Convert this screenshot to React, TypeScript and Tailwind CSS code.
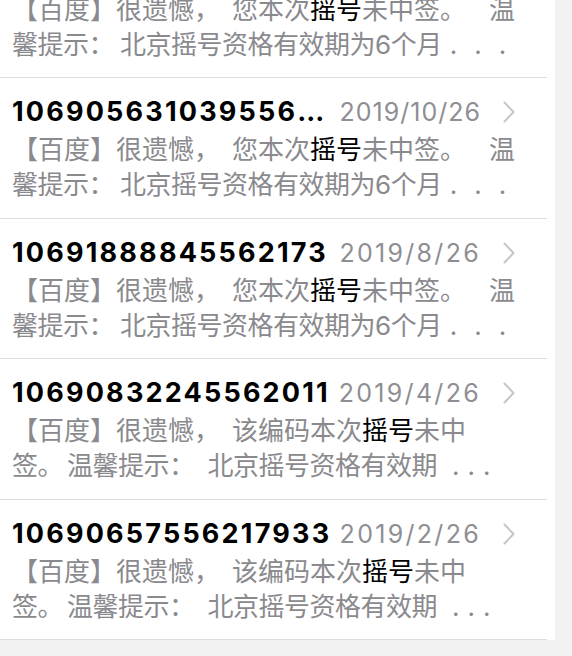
import React from "react";

type Row = {
  title: string;
  more?: boolean;
  date: string;
  kind: "A" | "B";
};

const rows: Row[] = [
  { title: "10690000000000000", date: "2019/11/26", kind: "A" },
  { title: "106905631039556", more: true, date: "2019/10/26", kind: "A" },
  { title: "10691888845562173", date: "2019/8/26", kind: "A" },
  { title: "10690832245562011", date: "2019/4/26", kind: "B" },
  { title: "10690657556217933", date: "2019/2/26", kind: "B" },
];

function Chevron() {
  return (
    <svg
      className="ml-[22px] shrink-0"
      width="12"
      height="22"
      viewBox="0 0 12 22"
      fill="none"
    >
      <path
        d="M1.5 1.5 L10.5 11 L1.5 20.5"
        stroke="#c6c6c9"
        strokeWidth="2"
        strokeLinecap="round"
        strokeLinejoin="round"
      />
    </svg>
  );
}

function BodyA() {
  return (
    <>
      <div>
        【百度】很遗憾<span className="mr-[12px]">，</span>您本次
        <span className="text-black">摇号</span>未中签
        <span className="mr-[23px]">。</span>温
      </div>
      <div className="tracking-[-0.5px]">
        馨提示<span className="mr-[6px]">：</span>北京摇号资格有效期为6个月
        <span className="ml-[8px] tracking-[17px]">...</span>
      </div>
    </>
  );
}

function BodyB() {
  return (
    <>
      <div>
        【百度】很遗憾<span className="mr-[12px]">，</span>该编码本次
        <span className="text-black">摇号</span>未中
      </div>
      <div className="tracking-[-0.5px]">
        签<span className="mr-[4px]">。</span>温馨提示
        <span className="mr-[13px]">：</span>北京摇号资格有效期
        <span className="ml-[15px] tracking-[8px]">...</span>
      </div>
    </>
  );
}

export default function App() {
  return (
    <div className="flex h-[656px] w-[572px] items-start overflow-hidden bg-[#f2f2f2] font-['Inter','Noto_Sans_CJK_SC',sans-serif]">
      <div className="mt-[-62.5px] w-[555px] bg-white">
        {rows.map((r, i) => (
          <div
            key={i}
            className="h-[140.5px] w-[547px] border-b border-[#dddddd] pl-[12px] pr-[32px] pt-[18px]"
          >
            <div className="flex h-[32px] items-center">
              <span className="mr-[8px] whitespace-nowrap text-[27px] font-bold leading-[32px] tracking-[2.2px] text-black">
                {r.title}
                {r.more && <span className="tracking-[0px]">...</span>}
              </span>
              <span
                className={
                  r.more
                    ? "ml-auto shrink-0 whitespace-nowrap text-[25px] leading-[32px] tracking-[1px] text-[#8e8e93]"
                    : "ml-auto shrink-0 whitespace-nowrap text-[25px] leading-[32px] tracking-[2.3px] text-[#8e8e93]"
                }
              >
                {r.date}
              </span>
              <Chevron />
            </div>
            <div className="mt-[4px] whitespace-nowrap text-[26px] leading-[35px] text-[#8a8a8e]">
              {r.kind === "A" ? <BodyA /> : <BodyB />}
            </div>
          </div>
        ))}
      </div>
    </div>
  );
}
